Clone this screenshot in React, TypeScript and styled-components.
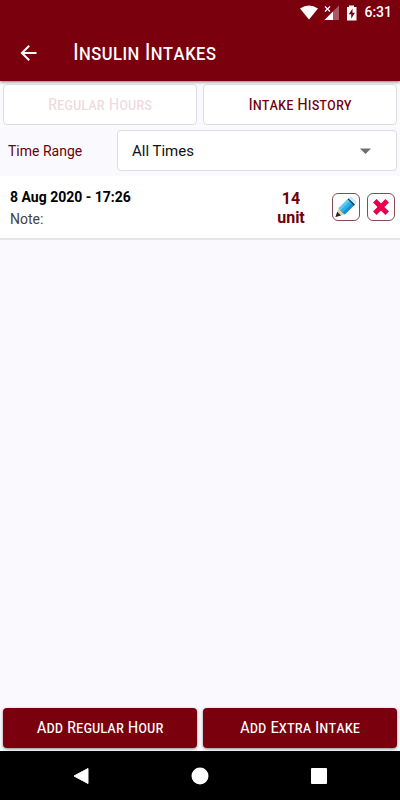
import React from "react";
import styled, { createGlobalStyle } from "styled-components";

const maroon = "#7a000e";
const wine = "#6b0008";
const capsFont = `"Roboto Condensed", Roboto, sans-serif`;

const GlobalStyle = createGlobalStyle`
  * { box-sizing: border-box; }
  body { margin: 0; background: #faf9fe; font-family: Roboto, sans-serif; }
  button, select { font-family: inherit; margin: 0; }
`;

const Screen = styled.div`
  display: flex;
  flex-direction: column;
  min-height: 100vh;
`;

const Header = styled.header`
  background: ${maroon};
  color: #fff;
  box-shadow: 0 1px 3px rgba(0, 0, 0, 0.5);
`;

const StatusBar = styled.div`
  display: flex;
  align-items: center;
  justify-content: flex-end;
  height: 25px;
  padding-right: 8px;
`;

const Clock = styled.time`
  margin-left: 6px;
  font-size: 14px;
  line-height: 25px;
  font-weight: 500;
`;

const TitleBar = styled.div`
  display: flex;
  align-items: center;
  height: 56px;
  padding: 0 16px;
  gap: 32px;
`;

const BackButton = styled.button`
  display: flex;
  padding: 0;
  border: 0;
  background: none;
  color: inherit;
`;

const Title = styled.h1`
  margin: 0;
  font-family: ${capsFont};
  font-size: 23px;
  line-height: 28px;
  font-weight: 400;
  font-variant: small-caps;
`;

const Main = styled.main`
  flex: 1;
`;

const ButtonRow = styled.div`
  display: grid;
  grid-template-columns: 1fr 1fr;
  gap: 6px;
  padding: 3px;
`;

const Tab = styled.button`
  height: 41px;
  padding: 0 0 2px;
  border: 1px solid #dddde0;
  border-radius: 4px;
  background: #fff;
  color: ${wine};
  font-family: ${capsFont};
  font-size: 17px;
  line-height: 20px;
  font-weight: 400;
  font-variant: small-caps;

  &:disabled { color: #eedadd; }
`;

const Filter = styled.div`
  display: flex;
  align-items: center;
  padding: 2px 3px 5px 8px;
`;

const FilterLabel = styled.label`
  flex: 0 0 109px;
  color: ${wine};
  font-size: 14px;
  line-height: 20px;
`;

const SelectBox = styled.div`
  flex: 1;
  display: grid;
  align-items: center;

  & > * { grid-area: 1 / 1; }
  & > svg { justify-self: end; margin-right: 26px; pointer-events: none; }
`;

const Select = styled.select`
  width: 100%;
  height: 41px;
  padding: 0 14px;
  border: 1px solid #dddde0;
  border-radius: 4px;
  background: #fff;
  color: #111;
  font-size: 15px;
  appearance: none;
`;

const List = styled.ul`
  margin: 0;
  padding: 0;
  list-style: none;
`;

const Item = styled.li`
  display: flex;
  align-items: center;
  height: 64px;
  padding: 0 5px 0 10px;
  border-bottom: 2px solid #e6e6e8;
  background: #fff;
`;

const Details = styled.div`
  flex: 1;
  display: flex;
  flex-direction: column;
  gap: 2px;
  padding-top: 1px;
`;

const When = styled.strong`
  color: #000;
  font-size: 14px;
  line-height: 20px;
  font-weight: 700;
`;

const Note = styled.span`
  color: #444;
  font-size: 14px;
  line-height: 20px;
`;

const Dose = styled.div`
  width: 48px;
  margin-right: 17px;
  padding-top: 2px;
  color: ${wine};
  font-size: 16px;
  line-height: 19px;
  font-weight: 700;
  text-align: center;
`;

const Actions = styled.div`
  display: flex;
  gap: 7px;
`;

const IconButton = styled.button`
  display: flex;
  align-items: center;
  justify-content: center;
  width: 28px;
  height: 28px;
  padding: 0;
  border: 1px solid #8c4a50;
  border-radius: 6px;
  background: #fff;
`;

const AddButton = styled.button`
  height: 40px;
  padding: 0 0 2px;
  border: 0;
  border-radius: 4px;
  background: ${maroon};
  box-shadow: 0 1px 3px rgba(0, 0, 0, 0.45);
  color: #fff;
  font-family: ${capsFont};
  font-size: 17px;
  line-height: 20px;
  font-weight: 400;
  font-variant: small-caps;
`;

const NavBar = styled.nav`
  display: flex;
  justify-content: center;
  gap: 71px;
  height: 49px;
  background: #000;
`;

const NavButton = styled.button`
  display: flex;
  align-items: center;
  justify-content: center;
  width: 48px;
  padding: 0;
  border: 0;
  background: none;
`;

const intakes = [{ when: "8 Aug 2020 - 17:26", note: "Note:", amount: 14, unit: "unit" }];

function StatusIcons() {
  return (
    <svg width="58" height="18" viewBox="0 0 58 18" aria-hidden="true">
      <path d="M0 4.500Q9-1.500 18 4.500L9 15.500Z" fill="#fff" />
      <path d="M39 1.500V16H24.500Z" fill="#fff" fillOpacity=".35" />
      <path d="M33 7.500V16H24.500Z" fill="#fff" />
      <path d="M25 2.500l5 5M30 2.500l-5 5" stroke="#fff" strokeWidth="1.200" />
      <path d="M49 1.500h5V3h2.500v13.500h-9.500V3h2Z" fill="#fff" />
      <path d="M52.500 4.500L48.800 10.300h2.400v4.500l3.700-6h-2.400Z" fill={maroon} />
    </svg>
  );
}

function PencilIcon() {
  return (
    <svg width="22" height="22" viewBox="0 0 22 22" aria-hidden="true">
      <path d="M0.500 21L3.500 12L10 18.500Z" fill="#edd09a" />
      <path d="M0.500 21L2.200 15.800L6 19.500Z" fill="#20242b" />
      <path d="M3.500 12L13 2.800L15.300 5L5.500 14.800Z" fill="#5ccbf3" />
      <path d="M5.200 14.500L15 4.700L17.800 7.400L8 17.200Z" fill="#2cb0e8" />
      <path d="M7.500 16.700L17.200 7L19.300 9.200L10 18.500Z" fill="#1590cc" />
      <path d="M12.700 3.200L13.700 2.200L20 8.400L18.900 9.500Z" fill="#173448" />
      <path d="M13.600 2.300L15.200 0.700Q16 0 17 1L21 5Q22 6 21.300 6.900L19.900 8.300Z" fill="#c9e8ff" />
    </svg>
  );
}

export default function App() {
  return (
    <>
      <GlobalStyle />
      <Screen>
        <Header>
          <StatusBar>
            <StatusIcons />
            <Clock>6:31</Clock>
          </StatusBar>
          <TitleBar>
            <BackButton aria-label="Back">
              <svg width="25" height="24" viewBox="0 0 24 24">
                <path d="M20 11H7.830l5.590-5.590L12 4l-8 8 8 8 1.410-1.410L7.830 13H20z" fill="currentColor" />
              </svg>
            </BackButton>
            <Title>Insulin Intakes</Title>
          </TitleBar>
        </Header>
        <Main>
          <ButtonRow>
            <Tab disabled>Regular Hours</Tab>
            <Tab>Intake History</Tab>
          </ButtonRow>
          <Filter>
            <FilterLabel htmlFor="range">Time Range</FilterLabel>
            <SelectBox>
              <Select id="range">
                <option>All Times</option>
              </Select>
              <svg width="11" height="6" viewBox="0 0 11 6" aria-hidden="true">
                <path d="M0 0.500H11L5.500 6Z" fill="#6e6e6e" />
              </svg>
            </SelectBox>
          </Filter>
          <List>
            {intakes.map((intake) => (
              <Item key={intake.when}>
                <Details>
                  <When>{intake.when}</When>
                  <Note>{intake.note}</Note>
                </Details>
                <Dose>
                  {intake.amount}
                  <br />
                  {intake.unit}
                </Dose>
                <Actions>
                  <IconButton aria-label="Edit">
                    <PencilIcon />
                  </IconButton>
                  <IconButton aria-label="Delete">
                    <svg width="18" height="18" viewBox="0 0 18 18" aria-hidden="true">
                      <path d="M2.800 2.800L15.200 15.200M15.200 2.800L2.800 15.200" stroke="#e6004c" strokeWidth="5" />
                    </svg>
                  </IconButton>
                </Actions>
              </Item>
            ))}
          </List>
        </Main>
        <ButtonRow>
          <AddButton>Add Regular Hour</AddButton>
          <AddButton>Add Extra Intake</AddButton>
        </ButtonRow>
        <NavBar>
          <NavButton aria-label="Back">
            <svg width="16" height="18" viewBox="0 0 16 18">
              <path d="M15 1.500V16.500L1 9Z" fill="#fff" stroke="#fff" strokeLinejoin="round" />
            </svg>
          </NavButton>
          <NavButton aria-label="Home">
            <svg width="18" height="18" viewBox="0 0 18 18">
              <circle cx="9" cy="9" r="8.500" fill="#fff" />
            </svg>
          </NavButton>
          <NavButton aria-label="Overview">
            <svg width="16" height="16" viewBox="0 0 16 16">
              <rect width="16" height="16" rx="1" fill="#fff" />
            </svg>
          </NavButton>
        </NavBar>
      </Screen>
    </>
  );
}
